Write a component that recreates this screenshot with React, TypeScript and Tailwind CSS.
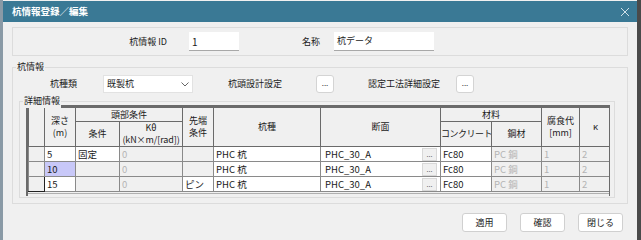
import React from "react";

const F = { fontFamily: '"Noto Sans CJK JP", "Noto Sans", sans-serif' };

function DotBtn() {
  return (
    <div className="w-[18px] h-[18px] bg-white border border-[#d4d4d4] rounded-[3px] flex items-center justify-center text-[8px] text-[#333] leading-none pb-[2px]">
      ...
    </div>
  );
}

type Row = {
  depth: string;
  cond: string;
  condWhite: boolean;
  tip: string;
  tipWhite: boolean;
  sel: boolean;
};

const rows: Row[] = [
  { depth: "5", cond: "固定", condWhite: true, tip: "", tipWhite: false, sel: false },
  { depth: "10", cond: "", condWhite: false, tip: "", tipWhite: false, sel: true },
  { depth: "15", cond: "", condWhite: false, tip: "ピン", tipWhite: true, sel: false },
];

const th = "border border-[#6a6a6a] bg-[#f0f0f0] text-center font-normal p-0 leading-[12px] text-[9px] overflow-hidden whitespace-nowrap";
const td = "border border-[#8a8a8a] px-[2px] py-0 h-[15px] text-[9.5px] leading-[12px] whitespace-nowrap overflow-hidden";

export default function App() {
  return (
    <div className="w-[641px] h-[240px] bg-[#4a4a4a] flex text-[#1a1a1a] text-[9px]" style={F}>
      <div className="w-[3px] bg-[#8a9aa6]" />
      <div className="w-[634px] flex flex-col bg-[#f0f0f0]">
        <div className="h-[21px] mt-[1px] bg-[#3a7995] flex items-center justify-between pl-[9px] pr-[6px]">
          <span className="text-white text-[9.5px] font-bold">杭情報登録／編集</span>
          <svg width="10" height="10" viewBox="0 0 10 10" className="mr-[1px]">
            <path d="M1 1L9 9M9 1L1 9" stroke="#cfe0e8" strokeWidth="1" />
          </svg>
        </div>
        <div className="flex-1 flex flex-col px-[9px] pt-[5px]">
          {/* top panel */}
          <div className="h-[29px] border border-[#dcdcdc] flex items-center">
            <div className="w-[154px] text-right">杭情報 ID</div>
            <div className="ml-[22px] w-[50px] h-[19px] bg-white border-b border-[#a8a8a8] flex items-center px-[3px] text-[10px]">1</div>
            <div className="ml-[63px]">名称</div>
            <div className="ml-[14px] w-[100px] h-[19px] bg-white border-b border-[#a8a8a8] flex items-center px-[3px]">杭データ</div>
          </div>
          {/* 杭情報 group */}
          <div className="relative mt-[11px] h-[137px] border border-[#dcdcdc]">
            <div className="absolute -top-[8px] left-[3px] bg-[#f0f0f0] px-[1px] leading-[14px]">杭情報</div>
            <div className="flex items-center mt-[7px] h-[18px]">
              <div className="ml-[37px] w-[27px]">杭種類</div>
              <div className="ml-[26px] w-[90px] h-[18px] bg-white border border-[#e2e2e2] flex items-center justify-between px-[3px]">
                <span>既製杭</span>
                <svg width="8" height="5" viewBox="0 0 8 5"><path d="M0.5 0.5L4 4L7.5 0.5" fill="none" stroke="#666" strokeWidth="1" /></svg>
              </div>
              <div className="ml-[35px] w-[54px]">杭頭設計設定</div>
              <div className="ml-[34px]"><DotBtn /></div>
              <div className="ml-[34px] w-[72px]">認定工法詳細設定</div>
              <div className="ml-[16px]"><DotBtn /></div>
            </div>
            {/* 詳細情報 group */}
            <div className="relative mt-[8px] ml-[6px] w-[596px] h-[97px] border border-[#dcdcdc]">
              <div className="absolute -top-[8px] left-[3px] bg-[#f0f0f0] px-[1px] leading-[14px]">詳細情報</div>
              <div className="ml-[6px] mt-[3px] w-[584px] h-[91px] border-l-2 border-t-2 border-r border-[#6a6a6a] bg-[#f0f0f0] overflow-hidden">
                <table className="table-fixed border-collapse w-[583px]">
                  <colgroup>
                    <col className="w-[16px]" />
                    <col className="w-[31px]" />
                    <col className="w-[44px]" />
                    <col className="w-[63px]" />
                    <col className="w-[31px]" />
                    <col className="w-[107px]" />
                    <col className="w-[120px]" />
                    <col className="w-[51px]" />
                    <col className="w-[50px]" />
                    <col className="w-[38px]" />
                    <col className="w-[32px]" />
                  </colgroup>
                  <thead>
                    <tr className="h-[14px]">
                      <th rowSpan={2} className={th}></th>
                      <th rowSpan={2} className={th}>深さ<br />(m)</th>
                      <th colSpan={2} className={th}>頭部条件</th>
                      <th rowSpan={2} className={th}>先端<br />条件</th>
                      <th rowSpan={2} className={th}>杭種</th>
                      <th rowSpan={2} className={th}>断面</th>
                      <th colSpan={2} className={th}>材料</th>
                      <th rowSpan={2} className={th}>腐食代<br />[mm]</th>
                      <th rowSpan={2} className={th}>κ</th>
                    </tr>
                    <tr className="h-[22px]">
                      <th className={th}>条件</th>
                      <th className={th + " text-[8px] leading-[10px] tracking-[-0.1px]"}>Kθ<br />(kN×m/[rad])</th>
                      <th className={th + " tracking-[-0.5px]"}>コンクリート</th>
                      <th className={th}>鋼材</th>
                    </tr>
                  </thead>
                  <tbody>
                    {rows.map((r, i) => (
                      <tr key={i} className="h-[15px]">
                        <td className={td + " bg-[#f0f0f0]" + (i === 2 ? " border-r-[#222] border-b-[#222]" : "")}></td>
                        <td className={td + (r.sel ? " bg-[#c8c8f8]" : " bg-white")}>{r.depth}</td>
                        <td className={td + (r.condWhite ? " bg-white" : " bg-[#f0f0f0]")}>{r.cond}</td>
                        <td className={td + " bg-[#f0f0f0] text-[#b4b4b4]"}>0</td>
                        <td className={td + (r.tipWhite ? " bg-white" : " bg-[#f0f0f0]")}>{r.tip}</td>
                        <td className={td + " bg-white"}>PHC 杭</td>
                        <td className={td + " bg-white p-0"}>
                          <div className="flex items-center justify-between h-[14px]">
                            <span className="pl-[2px]">PHC_30_A</span>
                            <div className="w-[15px] h-[13px] mr-[1px] bg-[#f0f0f0] border border-[#d8d8d8] flex items-center justify-center text-[7px] leading-none text-[#555]">...</div>
                          </div>
                        </td>
                        <td className={td + " bg-white"}>Fc80</td>
                        <td className={td + " bg-[#f0f0f0] text-[#b4b4b4]"}>PC 鋼</td>
                        <td className={td + " bg-[#f0f0f0] text-[#b4b4b4]"}>1</td>
                        <td className={td + " bg-[#f0f0f0] text-[#b4b4b4]"}>2</td>
                      </tr>
                    ))}
                  </tbody>
                </table>
                <div className="h-[2px] border-b border-[#b0b0b0]" />
              </div>
            </div>
          </div>
          {/* buttons */}
          <div className="flex justify-end gap-[13px] mt-[9px] mr-[5px]">
            {["適用", "確認", "閉じる"].map((t) => (
              <div key={t} className="w-[45px] h-[19px] bg-white border border-[#d0d0d0] rounded-[3px] flex items-center justify-center">
                {t}
              </div>
            ))}
          </div>
        </div>
      </div>
    </div>
  );
}
